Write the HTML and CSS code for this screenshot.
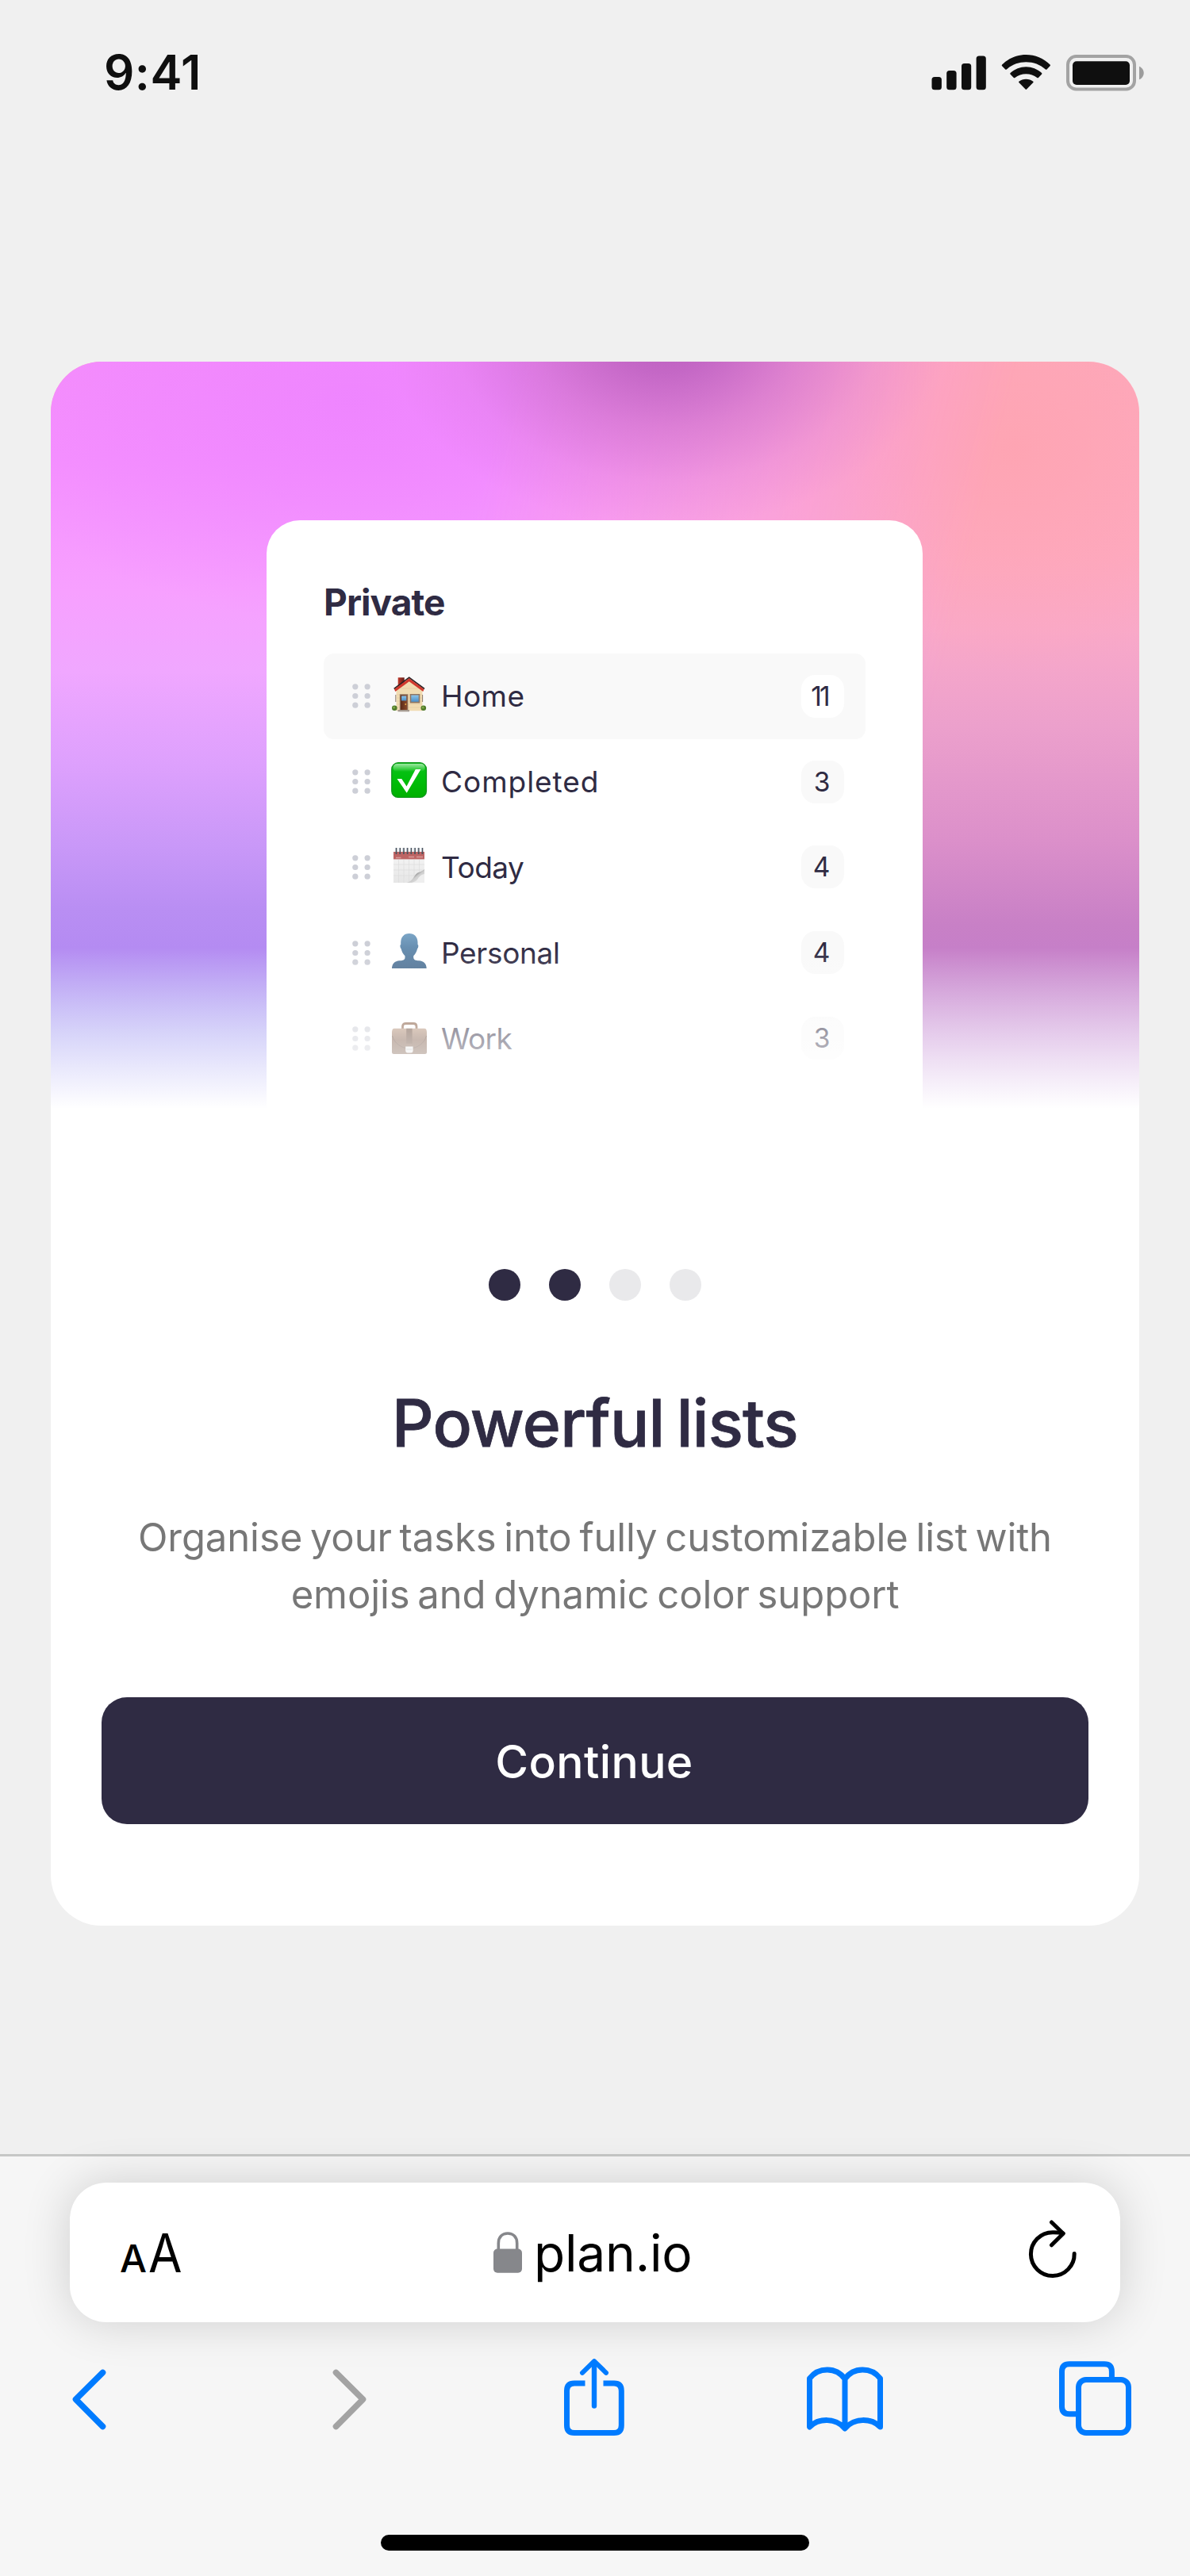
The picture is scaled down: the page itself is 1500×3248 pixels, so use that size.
FILE: index.html
```html
<!DOCTYPE html>
<html lang="en">
<head>
<meta charset="utf-8">
<title>plan.io</title>
<link rel="stylesheet" href="styles.css">
</head>
<body>
<svg class="defs" width="0" height="0" aria-hidden="true">
  <defs>
    <symbol id="grip" viewBox="0 0 23 31">
      <g fill="#cdcfd7">
        <circle cx="3.8" cy="3.8" r="3.6"/><circle cx="19.1" cy="3.8" r="3.6"/>
        <circle cx="3.8" cy="15.5" r="3.6"/><circle cx="19.1" cy="15.5" r="3.6"/>
        <circle cx="3.8" cy="27.2" r="3.6"/><circle cx="19.1" cy="27.2" r="3.6"/>
      </g>
    </symbol>
  </defs>
</svg>

<header class="status">
  <span class="status-time">9:41</span>
  <svg class="status-icons" width="268" height="48" viewBox="0 0 268 48">
    <g fill="#0f0f0f">
      <rect x="0.5" y="30" width="12.4" height="16.3" rx="3.6"/>
      <rect x="19.2" y="22" width="12.4" height="24.3" rx="3.6"/>
      <rect x="38" y="13" width="12.2" height="33.3" rx="3.6"/>
      <rect x="56.6" y="3.4" width="12.2" height="42.9" rx="3.6"/>
      <path d="M88.900 15.900Q88.400 15.200 89.100 14.500C97 6.500 108 2 119.300 2S141.600 6.500 149.600 14.500Q150.300 15.200 149.700 15.900L145.500 20.500Q144.700 21.200 143.900 20.500C137.300 14.400 128.500 11.200 119.300 11.200S101.400 14.400 94.800 20.500Q94 21.200 93.200 20.500Z"/>
      <path d="M99.400 26.500Q98.900 25.800 99.600 25.100C105 20 112 17.200 119.300 17.200S133.700 20 139.100 25.100Q139.700 25.800 139.200 26.500L134.900 31Q134.100 31.700 133.300 31C129.500 27.900 124.500 26.300 119.300 26.300S109.200 27.900 105.400 31Q104.600 31.700 103.800 31Z"/>
      <path d="M110.300 37.100Q109.700 36.400 110.400 35.700C112.800 33.800 116 32.700 119.300 32.700S125.900 33.800 128.300 35.700Q129 36.400 128.400 37.100L120.100 45.600Q119.300 46.300 118.600 45.600Z"/>
      <rect x="178" y="10.200" width="72" height="29.800" rx="5"/>
    </g>
    <rect x="172" y="4" width="84" height="41.500" rx="10.500" fill="none" stroke="#a3a3a3" stroke-width="4"/>
    <path d="M262 16.800C265.500 18.200 267.700 21.500 267.700 25S265.500 31.900 262 33.300Z" fill="#9c9c9c"/>
  </svg>
</header>

<main class="stage">
  <section class="card">
    <div class="hero">
      <div class="glow"></div>
      <div class="panel">
        <h2 class="panel-title">Private</h2>
        <ul class="rows">
          <li class="row row-active">
            <svg class="grip"><use href="#grip"/></svg>
            <svg class="emoji" viewBox="0 0 46 46">
              <defs>
                <linearGradient id="chim" x1="0" x2="1"><stop offset="0" stop-color="#c0392b"/><stop offset="1" stop-color="#5e1a14"/></linearGradient>
                <linearGradient id="win" x1="0" y1="0" x2="0" y2="1"><stop offset="0" stop-color="#8cc4ea"/><stop offset="1" stop-color="#4a8fc9"/></linearGradient>
                <linearGradient id="door" x1="0" x2="1"><stop offset="0" stop-color="#5a2a18"/><stop offset="1" stop-color="#8a4a2c"/></linearGradient>
              </defs>
              <rect x="8.700" y="1.300" width="8" height="13" fill="url(#chim)"/>
              <path d="M6.500 17 22.700 4 39.500 17V43.300H6.500Z" fill="#f1dcb2"/>
              <path d="M7 23H39M7 27H39M7 31H39M7 35H39M7 39H39M12 15H34" stroke="#e3caa0" stroke-width=".6"/>
              <path d="M3.700 15.500 22.700 1.300 42 15.500" fill="none" stroke="#2c2224" stroke-width="1.600"/>
              <path d="M4 16 22.700 2.200 41.500 16 40.300 19 22.700 6.300 5.300 19Z" fill="#d0392d"/>
              <path d="M5.800 23V32M39.600 23V32" stroke="#8c7a68" stroke-width="1"/>
              <circle cx="4.300" cy="39.800" r="3.300" fill="#4f7a2a"/><circle cx="40.800" cy="39.800" r="3.300" fill="#4f7a2a"/>
              <circle cx="3.600" cy="38.900" r="1.500" fill="#7fa848"/><circle cx="40.200" cy="38.900" r="1.500" fill="#7fa848"/>
              <rect x="10.800" y="22.300" width="10.500" height="20" fill="#8b6f5c"/>
              <rect x="12" y="23.500" width="8.200" height="19" fill="url(#door)"/>
              <rect x="13" y="24.500" width="6.300" height="6" fill="url(#win)"/>
              <circle cx="18.300" cy="35" r=".9" fill="#e9b24a"/>
              <rect x="8.500" y="42" width="14.500" height="2.300" fill="#a59a90"/>
              <rect x="23.700" y="22" width="12.600" height="11.500" fill="#8f7662"/>
              <rect x="25.300" y="23.500" width="9.400" height="8.300" fill="url(#win)"/>
            </svg>
            <span class="label label-home">Home</span>
            <span class="count count-narrow">11</span>
          </li>
          <li class="row">
            <svg class="grip"><use href="#grip"/></svg>
            <svg class="emoji" viewBox="0 0 46 46">
              <defs>
                <linearGradient id="chk" x1="0" y1="0" x2="0" y2="1"><stop offset="0" stop-color="#0cc21a"/><stop offset=".5" stop-color="#00be0a"/><stop offset="1" stop-color="#00b000"/></linearGradient>
                <linearGradient id="gloss" x1="0" y1="0" x2="0" y2="1"><stop offset="0" stop-color="#9be8a0"/><stop offset="1" stop-color="#9be8a0" stop-opacity="0"/></linearGradient>
              </defs>
              <rect x=".8" y=".8" width="43.600" height="43.600" rx="8" fill="url(#chk)" stroke="#109a1c" stroke-width="1.400"/>
              <rect x="2.500" y="2" width="40.200" height="10" rx="5" fill="url(#gloss)"/>
              <path d="M7.500 21H13.300L19.500 30.500 30.800 9H37.400L19.700 38.800Z" fill="#fff"/>
            </svg>
            <span class="label label-completed">Completed</span>
            <span class="count">3</span>
          </li>
          <li class="row">
            <svg class="grip"><use href="#grip"/></svg>
            <svg class="emoji" viewBox="0 0 46 46">
              <defs>
                <linearGradient id="page" x1="0" y1="0" x2="0" y2="1"><stop offset="0" stop-color="#f6f6f6"/><stop offset="1" stop-color="#e6e6e6"/></linearGradient>
                <linearGradient id="curl" x1="0" y1="0" x2="1" y2="1"><stop offset="0" stop-color="#c9c9c9"/><stop offset=".3" stop-color="#5b5b5b"/><stop offset=".55" stop-color="#cecece"/><stop offset="1" stop-color="#f0f0f0"/></linearGradient>
              </defs>
              <rect x="3" y="6" width="39" height="39" fill="url(#page)"/>
              <path d="M9.500 16V45M16 16V45M22.500 16V45M29 16V40M35.500 16V34M3 22H42M3 29H40M3 36H34" stroke="#dadada" stroke-width=".6"/>
              <rect x="3" y="6" width="39" height="9.400" fill="#bd6464"/>
              <path d="M6 13.500H12.500M22 12.500H29M32 12.500H40" stroke="#e3b0b0" stroke-width="1.600" opacity=".7"/>
              <path d="M42 28C38 32 33 31 30 36 27 41 24 44 20 45H42Z" fill="url(#curl)"/>
              <path d="M42 34C37 35 35 38 33 41 31 43.500 28 44.700 26 45H42Z" fill="#efefef"/>
              <path d="M6.500 1V9M11.200 1V9M15.900 1V9M20.600 1V9M25.300 1V9M30 1V9M34.700 1V9M39.400 1V9" stroke="#4c535c" stroke-width="1.800"/>
              <path d="M5.500 1V6M10.200 1V6M14.900 1V6M19.600 1V6M24.300 1V6M29 1V6M33.700 1V6M38.400 1V6" stroke="#b9c4cf" stroke-width=".9"/>
            </svg>
            <span class="label label-today">Today</span>
            <span class="count">4</span>
          </li>
          <li class="row">
            <svg class="grip"><use href="#grip"/></svg>
            <svg class="emoji" viewBox="0 0 46 46">
              <defs><linearGradient id="bust" x1="0" y1="0" x2="0" y2="1"><stop offset="0" stop-color="#7ba5c6"/><stop offset="1" stop-color="#4c6f92"/></linearGradient></defs>
              <path d="M22.800 1C29.500 1 33.400 5.500 33.500 12V15C34.700 15.300 34.600 18.500 33 20.500 32 24.500 30.500 27 28.200 29.300V31.500C28.600 34.500 31 35 35 35.300 41.500 35.800 44.500 39.500 44.700 45H1C1.200 39.500 4.200 35.800 10.700 35.300 14.700 35 17.200 34.500 17.500 31.500V29.300C15.200 27 13.700 24.500 12.700 20.500 11.100 18.500 11 15.300 12.200 15V12C12.300 5.500 16.100 1 22.800 1Z" fill="url(#bust)"/>
            </svg>
            <span class="label label-personal">Personal</span>
            <span class="count">4</span>
          </li>
          <li class="row">
            <svg class="grip"><use href="#grip"/></svg>
            <svg class="emoji" viewBox="0 0 46 46">
              <defs><linearGradient id="case" x1="0" y1="0" x2="0" y2="1"><stop offset="0" stop-color="#b6937a"/><stop offset=".45" stop-color="#7f5b47"/><stop offset="1" stop-color="#73523f"/></linearGradient></defs>
              <path d="M14.500 13V10.500Q14.500 6.500 18.500 6.500H28Q32 6.500 32 10.500V13" fill="none" stroke="#855a40" stroke-width="2.800"/>
              <path d="M4 12.800H42Q45 12.800 45 18V42.500Q45 45 42.500 45H3.500Q1 45 1 42.500V18Q1 12.800 4 12.800Z" fill="url(#case)"/>
              <path d="M1.500 22C4 32 14 38 23 38S42 32 44.500 22" fill="none" stroke="#5d3f30" stroke-width="1"/>
              <rect x="19.200" y="12.800" width="7.400" height="19" fill="#6a4a38"/>
              <path d="M18.200 35.500H27.600V40.500Q27.600 43.500 25 43.500H20.800Q18.200 43.500 18.200 40.500Z" fill="#ececec"/>
              <path d="M19.200 39H26.600" stroke="#b8b8b8" stroke-width="1"/>
            </svg>
            <span class="label label-work">Work</span>
            <span class="count">3</span>
          </li>
        </ul>
      </div>
    </div>

    <div class="dots">
      <i class="dot dot-on"></i><i class="dot dot-on"></i><i class="dot"></i><i class="dot"></i>
    </div>
    <h1 class="title">Powerful lists</h1>
    <p class="lead">Organise your tasks into fully customizable list with<br>emojis and dynamic color support</p>
    <button class="cta" type="button">Continue</button>
  </section>
</main>

<footer class="browser">
  <div class="urlbar">
    <span class="text-size"><span class="a-small">A</span><span class="a-large">A</span></span>
    <span class="address">
      <svg width="36" height="52" viewBox="0 0 36 52">
        <path d="M6.300 23V14.500C6.300 6.500 11 2 18 2S29.700 6.500 29.700 14.500V23" fill="none" stroke="#86878b" stroke-width="3.600"/>
        <rect x="0" y="21.500" width="36" height="30.300" rx="5" fill="#86878b"/>
      </svg>
      <span class="host">plan.io</span>
    </span>
    <svg class="reload" width="62" height="74" viewBox="0 0 62 74">
      <g fill="none" stroke="#000" stroke-width="5" stroke-linecap="round" stroke-linejoin="round">
        <path d="M58.200 42.500A27.400 27.400 0 1 1 30.800 15.700C36 15.600 40 16 44 17"/>
        <path d="M29.500 3 44.200 17.200 29.500 31.800"/>
      </g>
    </svg>
  </div>
  <nav class="tools">
    <svg width="44" height="98" viewBox="0 0 44 98"><path d="M39.500 18.500 5.500 52.300 39.500 86.500" fill="none" stroke="#007bff" stroke-width="7.600" stroke-linecap="round" stroke-linejoin="round"/></svg>
    <svg width="44" height="98" viewBox="0 0 44 98"><path d="M4.500 18.500 38.500 52.300 4.500 86.500" fill="none" stroke="#a3a3a3" stroke-width="7.600" stroke-linecap="round" stroke-linejoin="round"/></svg>
    <svg width="76" height="98" viewBox="0 0 76 98">
      <g fill="none" stroke="#007bff" stroke-width="7" stroke-linejoin="round">
        <path d="M26.500 32H13Q3.500 32 3.500 41.500V85Q3.500 94.500 13 94.500H63Q72.300 94.500 72.300 85V41.500Q72.300 32 63 32H49.500"/>
        <path d="M38 60.500V6" stroke-width="6.400" stroke-linecap="round"/>
        <path d="M23 18.800 38 4.200 53 18.800" stroke-width="6" stroke-linecap="round"/>
      </g>
    </svg>
    <svg width="96" height="98" viewBox="0 0 96 98">
      <path d="M3.500 25.800C15 11.300 37 11.300 48 26.500 59 11.300 81 11.300 92.500 25.800V87C81 75.500 59 75.500 48 89 37 75.500 15 75.500 3.500 87ZM48 26.500V89" fill="none" stroke="#007bff" stroke-width="7" stroke-linejoin="round"/>
    </svg>
    <svg width="92" height="98" viewBox="0 0 92 98">
      <g fill="none" stroke="#007bff" stroke-width="7">
        <path d="M66.400 24V17Q66.400 7.700 57 7.700H13Q3.500 7.700 3.500 17V61.500Q3.500 70.800 13 70.800H22"/>
        <rect x="24.500" y="27.500" width="63" height="67" rx="9.500"/>
      </g>
    </svg>
  </nav>
  <div class="home-bar"></div>
</footer>
</body>
</html>
```
FILE: styles.css
```css
* { box-sizing: border-box; }

body {
  margin: 0;
  width: 1500px;
  height: 3248px;
  display: flex;
  flex-direction: column;
  background: #f0f0f0;
  font-family: Inter, "Noto Sans", sans-serif;
  color: #2f2b43;
}

svg { display: block; flex: none; }
.defs { position: absolute; }

.status {
  height: 182px;
  padding: 0 58px 0 131px;
  display: flex;
  align-items: center;
  justify-content: space-between;
}
.status-time {
  font-size: 60px;
  font-weight: 600;
  letter-spacing: 0.008em;
  color: #0f0f0f;
}

.stage {
  height: 2534px;
  padding: 274px 64px 0;
}
.card {
  height: 1972px;
  border-radius: 64px;
  background: #fff;
  overflow: hidden;
  display: flex;
  flex-direction: column;
}

.hero {
  position: relative;
  height: 942px;
  padding: 200px 0 0 272px;
  display: flex;
  flex: none;
  background:
    radial-gradient(ellipse 320px 280px at 1215px 110px, rgba(255, 163, 175, 0.75) 0%, rgba(255, 164, 180, 0) 100%),
    linear-gradient(180deg, #fda9bd 0, #fdaac2 240px, #f9a9c9 340px, #eca0cc 460px, #dc90ca 600px, #c880c6 710px, #c67fc8 740px, #c9a0e0 942px);
}
.hero::before {
  content: "";
  position: absolute;
  inset: 0;
  background:
    radial-gradient(ellipse 480px 280px at 380px 50px, rgba(237, 131, 255, 0.8) 0%, rgba(237, 130, 255, 0) 100%),
    linear-gradient(180deg, #f58efc 0, #f590ff 120px, #f7a0ff 290px, #f0a7ff 390px, #dda0fd 510px, #c998f8 610px, #b98ef3 690px, #b48bf2 740px, #a9a3f3 850px, #a9a8f5 942px);
  -webkit-mask-image: linear-gradient(104deg, #000 36%, transparent 76%);
  mask-image: linear-gradient(104deg, #000 36%, transparent 76%);
}
.hero::after {
  content: "";
  position: absolute;
  left: 0;
  right: 0;
  bottom: 0;
  height: 204px;
  background: linear-gradient(180deg, rgba(255, 255, 255, 0), #fff);
}
.glow {
  position: absolute;
  inset: 0;
  background: radial-gradient(ellipse 350px 245px at 775px -35px, rgba(186, 94, 190, 1) 0%, rgba(188, 96, 192, 0.86) 20%, rgba(194, 102, 196, 0.5) 48%, rgba(202, 112, 204, 0.18) 76%, rgba(210, 120, 212, 0) 100%);
}

.panel {
  position: relative;
  width: 826.5px;
  padding: 72px 72px 0;
  border-radius: 42px 42px 0 0;
  background: #fff;
}
.panel-title {
  margin: 0 0 34px;
  font-size: 46px;
  line-height: 62px;
  font-weight: 700;
  letter-spacing: -0.02em;
}
.rows {
  margin: 0;
  padding: 0;
  list-style: none;
}
.row {
  height: 107.8px;
  padding: 0 27px 0 35.5px;
  display: flex;
  align-items: center;
  border-radius: 13px;
}
.row-active { background: #f9f9f9; }
.grip { width: 23px; height: 31px; }
.emoji {
  width: 46px;
  height: 46px;
  margin: 0 17px 4px 26.5px;
}
.label { font-size: 37px; }
.label-home { letter-spacing: 0.012em; }
.label-completed { letter-spacing: 0.026em; }
.label-today { letter-spacing: -0.014em; }
.label-personal { letter-spacing: -0.009em; }
.label-work { letter-spacing: -0.016em; }
.count {
  width: 54px;
  height: 54px;
  margin-left: auto;
  padding-right: 17px;
  border-radius: 18px;
  background: #f9f9f9;
  font-size: 33.5px;
  line-height: 54px;
  text-align: right;
}
.count-narrow { letter-spacing: -0.09em; padding-right: 20px; }
.row-active .count { background: #fff; }

.dots {
  margin-top: 202px;
  display: flex;
  justify-content: center;
  gap: 36px;
}
.dot {
  width: 40px;
  height: 40px;
  border-radius: 50%;
  background: #e9e9eb;
}
.dot-on { background: #2f2b43; }

.title {
  margin: 104px 0 0;
  font-size: 82px;
  line-height: 101px;
  font-weight: 550;
  letter-spacing: -0.009em;
  word-spacing: -0.07em;
  text-align: center;
  -webkit-text-stroke: 0.8px #2f2b43;
}
.lead {
  margin: 58px 0 0;
  font-size: 49px;
  line-height: 71.5px;
  letter-spacing: -0.1px;
  word-spacing: -0.08em;
  text-align: center;
  white-space: nowrap;
  color: #777;
}
.cta {
  height: 160px;
  margin: 94px 64px 0;
  padding: 2px 2px 0 0;
  border: 0;
  border-radius: 32px;
  background: #2f2b43;
  color: #fff;
  font: 500 57px Inter, "Noto Sans", sans-serif;
  letter-spacing: 0.007em;
}

.browser {
  flex: 1;
  padding: 33px 88px 0;
  border-top: 3px solid #c6c7c6;
  background: #f6f6f6;
  display: flex;
  flex-direction: column;
}
.urlbar {
  height: 176px;
  padding: 0 54px 0 63px;
  border-radius: 46px;
  background: #fff;
  box-shadow: 0 0 60px rgba(0, 0, 0, 0.16);
  display: flex;
  align-items: center;
  color: #000;
}
.text-size {
  width: 471px;
  display: flex;
  align-items: baseline;
  gap: 5px;
}
.a-small { font-size: 48px; width: 31px; font-weight: 500; }
.a-large { font-size: 67px; transform: scaleX(0.92); transform-origin: left; }
.address {
  display: flex;
  align-items: center;
  gap: 15px;
}
.host { font-size: 64px; letter-spacing: -0.003em; }
.reload { margin: 0 0 8px auto; }

.tools {
  height: 98px;
  margin: 45px 0 0 1.500px;
  display: grid;
  grid-template-columns: 329px 292.500px 306px 317.500px 92px;
}
.home-bar {
  width: 540px;
  height: 20px;
  margin: 125px auto 0;
  border-radius: 10px;
  background: #000;
}
```
